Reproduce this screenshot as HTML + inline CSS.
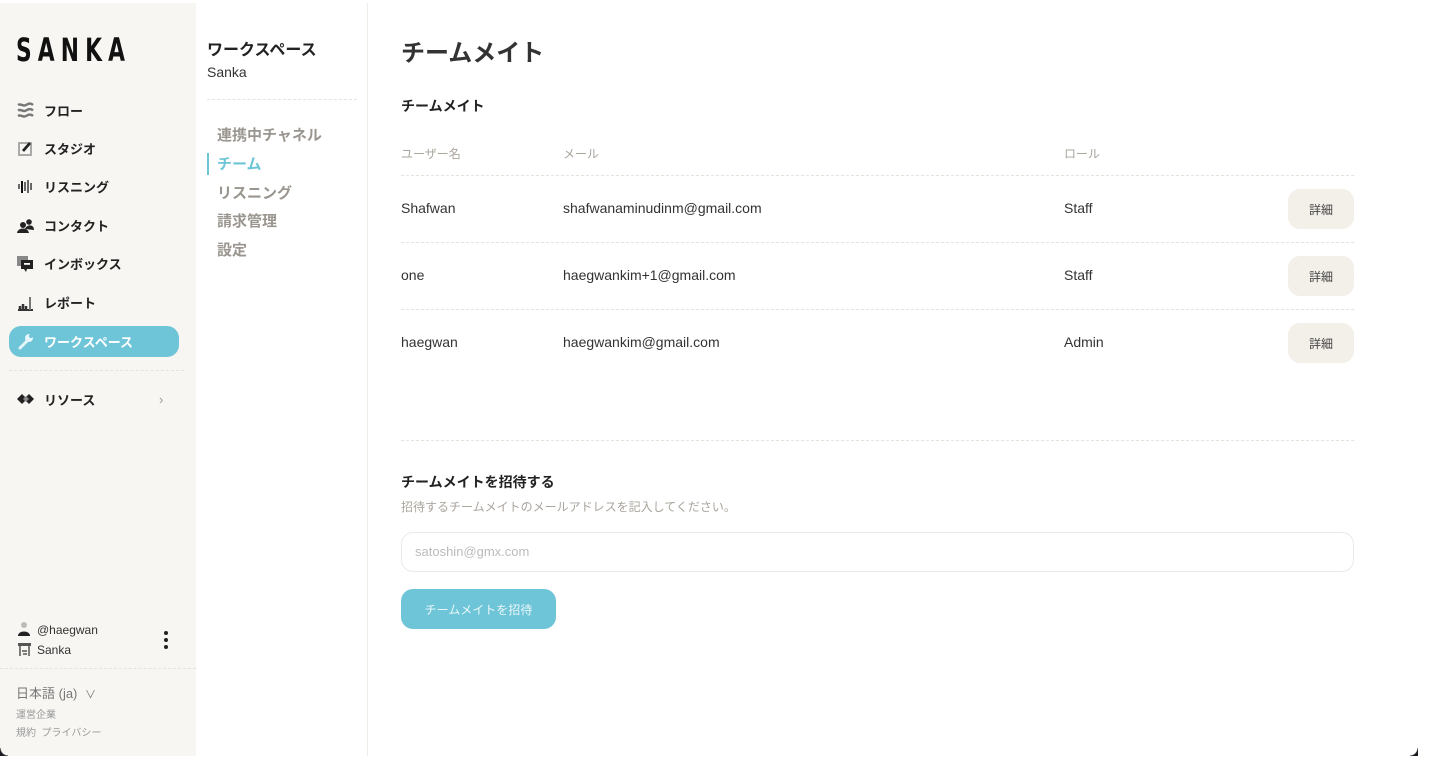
<!DOCTYPE html>
<html><head><meta charset="utf-8">
<style>
*{margin:0;padding:0;box-sizing:border-box}
body{width:1430px;height:760px;background:#fff;font-family:"Liberation Sans","Noto Sans CJK JP",sans-serif;color:#2b2b2b;position:relative;overflow:hidden}
.frame{position:absolute;left:0;top:0;width:1418px;height:756px;border-radius:0 0 10px 10px;overflow:hidden;background:#fff}
.side{position:absolute;left:0;top:3px;width:196px;height:760px;background:#f7f6f3}
.logo{position:absolute;left:16px;top:28px;font-family:"DejaVu Sans","Liberation Sans",sans-serif;font-weight:bold;font-size:32px;letter-spacing:9px;color:#111;transform:scaleX(0.68);transform-origin:left}
.nav{position:absolute;left:9px;width:170px;height:31px;display:flex;align-items:center;font-size:13px;font-weight:bold;color:#222;padding-left:8px}
.nav svg{width:17px;height:17px;margin-right:10px}
.nav.act{background:#6fc5d8;color:#fff;border-radius:12px}
.dash{position:absolute;border-top:1px dashed #e6e3dd}
.col2{position:absolute;left:196px;top:3px;width:172px;height:760px;background:#fff;border-right:1px solid #f0ede8}
.sub{position:absolute;left:21px;font-size:15px;font-weight:bold;color:#9a968f}
.main h1{position:absolute;left:401px;top:33px;font-size:24px;font-weight:bold;color:#333}
.h2{position:absolute;left:401px;font-size:14px;font-weight:bold;color:#222}
.th{position:absolute;top:145px;font-size:12px;color:#aaa59d}
.td{position:absolute;font-size:14px;color:#333}
.btn{position:absolute;left:1288px;width:66px;height:40px;border-radius:12px;background:#f3efe9;font-size:12px;color:#444;display:flex;align-items:center;justify-content:center}
.corner{position:absolute;width:8px;height:8px;top:748px}
</style></head><body>
<div class="frame">
<div class="side">
  <div class="logo">SANKA</div>
  <div class="nav" style="top:92px"><svg viewBox="0 0 17 17"><path d="M1 3c3-2 5 2 8 0s5-2 7 0M1 8.5c3-2 5 2 8 0s5-2 7 0M1 14c3-2 5 2 8 0s5-2 7 0" stroke="#777" stroke-width="2.4" fill="none"/></svg>フロー</div>
  <div class="nav" style="top:130px"><svg viewBox="0 0 17 17"><rect x="1" y="2" width="14" height="14" fill="#aaa"/><rect x="3" y="4" width="10" height="10" fill="#f7f6f3"/><path d="M6 11l7-8" stroke="#222" stroke-width="2.8"/></svg>スタジオ</div>
  <div class="nav" style="top:168px"><svg viewBox="0 0 17 17"><path d="M2 6v5M5 3v12M8 4v9M11 2v13M14 5v7" stroke="#444" stroke-width="1.6"/><path d="M5 3v12" stroke="#111" stroke-width="2"/></svg>リスニング</div>
  <div class="nav" style="top:207px"><svg viewBox="0 0 17 17"><circle cx="6" cy="8" r="3" fill="#222"/><circle cx="12" cy="5" r="2.8" fill="#222"/><path d="M0 16c1-6 11-6 12 0zM8 12c2-5 9-5 9 1z" fill="#222"/></svg>コンタクト</div>
  <div class="nav" style="top:245px"><svg viewBox="0 0 17 17"><rect x="0" y="1" width="11" height="10" fill="#888"/><rect x="4" y="5" width="12" height="9" fill="#222"/><rect x="7" y="8" width="6" height="1.8" fill="#fff"/><path d="M7 14l2 3 1-3z" fill="#222"/></svg>インボックス</div>
  <div class="nav" style="top:284px"><svg viewBox="0 0 17 17"><path d="M1 16h15" stroke="#333" stroke-width="2"/><path d="M3 12v4M6 10v6M9 12v4" stroke="#333" stroke-width="2.5"/><path d="M13 3v13" stroke="#777" stroke-width="2"/></svg>レポート</div>
  <div class="nav act" style="top:323px"><svg viewBox="0 0 17 17"><path d="M3 15l7-7" stroke="#e6f6fa" stroke-width="3" stroke-linecap="round"/><circle cx="12" cy="5" r="4" fill="#e6f6fa"/><circle cx="14" cy="3" r="2" fill="#6fc5d8"/></svg>ワークスペース</div>
  <div class="dash" style="left:9px;top:367px;width:175px"></div>
  <div class="nav" style="top:381px"><svg viewBox="0 0 17 17"><path d="M0 8l5-5 5 5-5 5z" fill="#222"/><path d="M7 8l5-5 5 5-5 5z" fill="#222"/><path d="M6 8l3-3 3 3-3 3z" fill="#888"/></svg>リソース<span style="position:absolute;left:150px;color:#999;font-weight:normal">›</span></div>
  <div style="position:absolute;left:17px;top:617px;font-size:12px;color:#333;line-height:20px">
    <div><svg width="14" height="14" viewBox="0 0 14 14" style="vertical-align:-2px;margin-right:6px"><circle cx="7" cy="3" r="3" fill="#bbb"/><path d="M1 14c0-6 12-6 12 0z" fill="#222"/></svg>@haegwan</div>
    <div><svg width="16" height="14" viewBox="0 0 16 14" style="vertical-align:-2px;margin-right:4px"><rect x="1" y="1" width="13" height="3" fill="#555"/><path d="M3 4v10M12 4v10M5 9h5M6 12h4" stroke="#555" stroke-width="1.5"/></svg>Sanka</div>
  </div>
  <div style="position:absolute;left:164px;top:628px;width:4px;height:20px"><div style="width:4px;height:4px;border-radius:2px;background:#222;margin-bottom:3px"></div><div style="width:4px;height:4px;border-radius:2px;background:#222;margin-bottom:3px"></div><div style="width:4px;height:4px;border-radius:2px;background:#222"></div></div>
  <div class="dash" style="left:0;top:665px;width:196px"></div>
  <div style="position:absolute;left:16px;top:680px;font-size:13px;color:#777">日本語 (ja) <span style="font-size:11px;margin-left:4px">∨</span></div>
  <div style="position:absolute;left:16px;top:703px;font-size:10px;color:#999">運営企業</div>
  <div style="position:absolute;left:16px;top:721px;font-size:10px;color:#999">規約&nbsp;&nbsp;プライバシー</div>
</div>
<div class="col2">
  <div style="position:absolute;left:11px;top:33px;font-size:16px;font-weight:bold;color:#222">ワークスペース</div>
  <div style="position:absolute;left:11px;top:61px;font-size:14px;color:#333">Sanka</div>
  <div class="dash" style="left:11px;top:96px;width:150px"></div>
  <div class="sub" style="top:121px">連携中チャネル</div>
  <div style="position:absolute;left:11px;top:150px;width:2px;height:22px;background:#6fc5d8"></div>
  <div class="sub" style="top:150px;color:#6fc5d8">チーム</div>
  <div class="sub" style="top:179px">リスニング</div>
  <div class="sub" style="top:207px">請求管理</div>
  <div class="sub" style="top:236px">設定</div>
</div>
<div class="main">
  <h1>チームメイト</h1>
  <div class="h2" style="top:96px">チームメイト</div>
  <div class="th" style="left:401px">ユーザー名</div>
  <div class="th" style="left:563px">メール</div>
  <div class="th" style="left:1064px">ロール</div>
  <div class="dash" style="left:401px;top:175px;width:953px"></div>
  <div class="td" style="left:401px;top:200px">Shafwan</div>
  <div class="td" style="left:563px;top:200px">shafwanaminudinm@gmail.com</div>
  <div class="td" style="left:1064px;top:200px">Staff</div>
  <div class="btn" style="top:189px">詳細</div>
  <div class="dash" style="left:401px;top:242px;width:953px"></div>
  <div class="td" style="left:401px;top:267px">one</div>
  <div class="td" style="left:563px;top:267px">haegwankim+1@gmail.com</div>
  <div class="td" style="left:1064px;top:267px">Staff</div>
  <div class="btn" style="top:256px">詳細</div>
  <div class="dash" style="left:401px;top:309px;width:953px"></div>
  <div class="td" style="left:401px;top:334px">haegwan</div>
  <div class="td" style="left:563px;top:334px">haegwankim@gmail.com</div>
  <div class="td" style="left:1064px;top:334px">Admin</div>
  <div class="btn" style="top:323px">詳細</div>
  <div class="dash" style="left:401px;top:440px;width:953px"></div>
  <div class="h2" style="top:472px">チームメイトを招待する</div>
  <div style="position:absolute;left:401px;top:498px;font-size:12px;color:#aaa59d">招待するチームメイトのメールアドレスを記入してください。</div>
  <div style="position:absolute;left:401px;top:532px;width:953px;height:40px;border:1px solid #ece9e4;border-radius:12px;padding-left:13px;line-height:38px;font-size:13px;color:#bbb">satoshin@gmx.com</div>
  <div style="position:absolute;left:401px;top:589px;width:155px;height:40px;border-radius:12px;background:#6fc5d8;color:#eaf7fa;font-size:12px;display:flex;align-items:center;justify-content:center">チームメイトを招待</div>
</div>
</div>
<div class="corner" style="left:0;background:radial-gradient(circle at 100% 0,transparent 7px,#1a1a22 8px)"></div>
<div class="corner" style="left:1410px;background:radial-gradient(circle at 0 0,transparent 7px,#1a1a22 8px)"></div>
</body></html>
